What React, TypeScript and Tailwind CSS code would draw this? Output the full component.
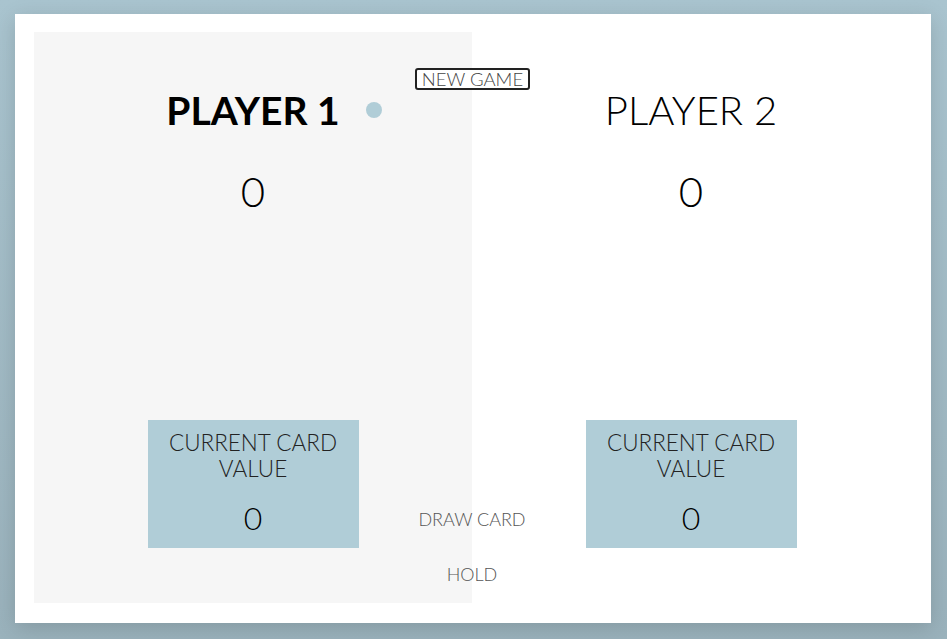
const font = { fontFamily: "Lato, 'Open Sans', sans-serif" };

function Panel({ name, active }: { name: string; active?: boolean }) {
  return (
    <div className={`flex h-full w-[438px] flex-col items-center ${active ? "bg-[#f6f6f6]" : "bg-white"}`}>
      <div className="relative mt-[58px]">
        <span className={`block leading-[40px] text-black ${active ? "text-[39px] font-bold" : "text-[40px] font-light"}`}>
          {name}
        </span>
        {active && <span className="absolute right-[-42px] top-[12px] h-4 w-4 rounded-full bg-[#b0cdd7]" />}
      </div>
      <div className="mt-[40px] text-[42px] font-light leading-[42px] text-black">0</div>
      <div className="mt-auto mb-[55px] flex h-32 w-[211px] flex-col items-center bg-[#b0cdd7] pt-[10px] text-[#222]">
        <div className="text-center text-[22.5px] font-light leading-[26px]">
          CURRENT CARD
          <br />
          VALUE
        </div>
        <div className="mt-[20px] text-[32px] font-light leading-[32px] text-black">0</div>
      </div>
    </div>
  );
}

export default function App() {
  return (
    <div className="h-[639px] w-full bg-[linear-gradient(to_bottom,#a9c4cf,#9ab2bc)] pl-[15px] pt-[14px]" style={font}>
      <div className="relative h-[609px] w-[916px] bg-white pb-[20px] pl-[19px] pr-[18px] pt-[18px] shadow-[0_5px_20px_rgba(0,0,0,0.15)]">
        <div className="flex h-full">
          <Panel name="PLAYER 1" active />
          <Panel name="PLAYER 2" />
        </div>
        <button className="absolute left-[400px] top-[54px] h-[22px] w-[115px] rounded-[3px] border-2 border-[#222] bg-white text-[18.5px] font-light leading-[18px] text-[#444]">
          NEW GAME
        </button>
        <button className="absolute left-[357px] top-[492px] w-[200px] text-[18px] font-light text-[#555]">
          DRAW CARD
        </button>
        <button className="absolute left-[357px] top-[547px] w-[200px] text-[18px] font-light text-[#555]">
          HOLD
        </button>
      </div>
    </div>
  );
}
